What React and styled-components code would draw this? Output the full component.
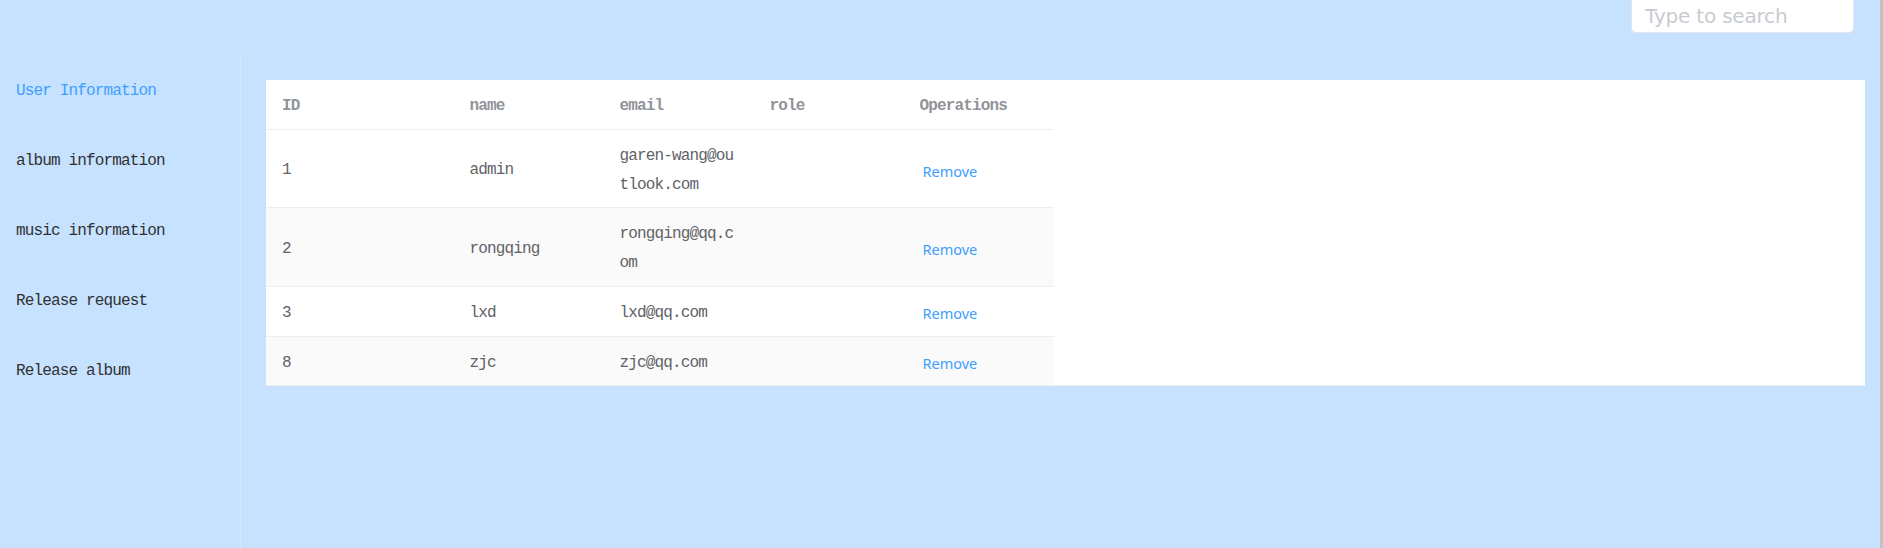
import styled, { createGlobalStyle } from 'styled-components';

const GlobalStyle = createGlobalStyle`
  html, body {
    margin: 0;
    padding: 0;
  }
  body {
    background: #c6e2ff;
    font-family: "Liberation Mono", monospace;
  }
`;

const menu = [
  "User Information",
  "album information",
  "music information",
  "Release request",
  "Release album",
];

const users = [
  { id: 1, name: "admin", email: "garen-wang@outlook.com", role: "" },
  { id: 2, name: "rongqing", email: "rongqing@qq.com", role: "" },
  { id: 3, name: "lxd", email: "lxd@qq.com", role: "" },
  { id: 8, name: "zjc", email: "zjc@qq.com", role: "" },
];

const columns = [
  { key: "id", label: "ID", width: 187.5 },
  { key: "name", label: "name", width: 150 },
  { key: "email", label: "email", width: 150 },
  { key: "role", label: "role", width: 150 },
  { key: "ops", label: "Operations", width: 150 },
];

const App = () => {
  return (
    <Page>
      <GlobalStyle />
      <Header>
        <SearchInput placeholder="Type to search" />
      </Header>
      <Body>
        <Menu>
          {menu.map((item, i) => (
            <MenuItem key={item} active={i === 0}>
              {item}
            </MenuItem>
          ))}
        </Menu>
        <Main>
          <Card>
            <Table>
              <colgroup>
                {columns.map((c) => (
                  <col key={c.key} style={{ width: c.width }} />
                ))}
              </colgroup>
              <thead>
                <tr>
                  {columns.map((c) => (
                    <Th key={c.key}>{c.label}</Th>
                  ))}
                </tr>
              </thead>
              <tbody>
                {users.map((u, i) => (
                  <Row key={u.id} striped={i % 2 === 1}>
                    <Td>{u.id}</Td>
                    <Td>{u.name}</Td>
                    <Td>{u.email}</Td>
                    <Td>{u.role}</Td>
                    <Td>
                      <RemoveButton>Remove</RemoveButton>
                    </Td>
                  </Row>
                ))}
              </tbody>
            </Table>
          </Card>
        </Main>
      </Body>
    </Page>
  );
};

const Page = styled.div`
  min-height: 100vh;
  box-sizing: border-box;
  background: #c6e2ff;
  border-right: 3px solid #c2c2c2;
  display: flex;
  flex-direction: column;
`;

const Header = styled.header`
  height: 33px;
  display: flex;
  justify-content: flex-end;
  align-items: flex-end;
  padding-right: 26px;
`;

const SearchInput = styled.input`
  width: 223px;
  height: 40px;
  flex-shrink: 0;
  box-sizing: border-box;
  border: 1px solid #e4e7ed;
  border-radius: 5px;
  background: #fff;
  padding: 5px 13px 0 13px;
  font-family: "DejaVu Sans", sans-serif;
  font-size: 20px;
  letter-spacing: -0.2px;
  outline: none;
  &::placeholder {
    color: #c8cbd1;
  }
`;

const Body = styled.div`
  display: flex;
  padding-top: 22px;
  flex: 1;
`;

const Menu = styled.ul`
  list-style: none;
  margin: 0;
  padding: 0;
  width: 240px;
  flex-shrink: 0;
  border-right: 1px solid #d9e7f6;
`;

const MenuItem = styled.li`
  height: 70px;
  box-sizing: border-box;
  padding: 3px 0 0 16px;
  line-height: 67px;
  font-size: 16px;
  letter-spacing: -0.85px;
  color: ${(p) => (p.active ? "#409eff" : "#303133")};
  white-space: nowrap;
`;

const Main = styled.main`
  flex: 1;
  padding: 25px 15px 25px 25px;
`;

const Card = styled.div`
  background: #fff;
  border-bottom: 1px solid #ebeef5;
`;

const Table = styled.table`
  table-layout: fixed;
  width: 787.5px;
  border-collapse: collapse;
  font-size: 16px;
  letter-spacing: -0.85px;
`;

const Th = styled.th`
  text-align: left;
  font-weight: bold;
  color: #909399;
  padding: 12px 16px 8px 16px;
  line-height: 28.75px;
  border-bottom: 1px solid #ebeef5;
`;

const Row = styled.tr`
  background: ${(p) => (p.striped ? "#fafafa" : "#fff")};
  &:last-child td {
    border-bottom: none;
  }
`;

const Td = styled.td`
  color: #606266;
  padding: 12px 16px 8px 16px;
  height: 28.75px;
  line-height: 28.75px;
  vertical-align: middle;
  word-break: break-all;
  border-bottom: 1px solid #ebeef5;
`;

const RemoveButton = styled.button`
  display: block;
  background: none;
  border: none;
  padding: 0 0 0 3px;
  line-height: 24px;
  font-family: "Noto Sans", sans-serif;
  font-size: 14.5px;
  letter-spacing: 0;
  color: #409eff;
  cursor: pointer;
`;

export default App;
